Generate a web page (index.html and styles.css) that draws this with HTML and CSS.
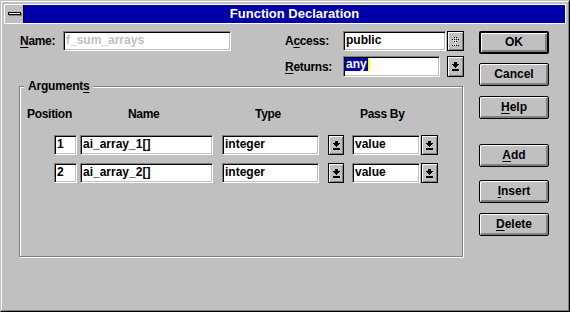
FILE: index.html
```html
<!DOCTYPE html>
<html>
<head>
<meta charset="utf-8">
<link rel="stylesheet" href="styles.css">
</head>
<body>
<div class="window">
  <div class="frame">
    <div class="titlebar">
      <div class="sysmenu"><span class="sysbar"></span></div>
      <div class="caption">Function Declaration</div>
    </div>
    <div class="client">
      <div class="form">
        <div class="row row-top">
          <span class="lbl lbl-name"><u>N</u>ame:</span>
          <div class="edit edit-name disabled">f_sum_arrays</div>
          <span class="lbl lbl-access">A<u>c</u>cess:</span>
          <div class="edit edit-access">public</div>
          <div class="dropbtn dropbtn-access">
            <svg width="7" height="9" viewBox="0 0 7 9" shape-rendering="crispEdges">
              <defs>
                <pattern id="dith" width="2" height="2" patternUnits="userSpaceOnUse">
                  <rect x="0" y="0" width="1" height="1" fill="#000"/>
                  <rect x="1" y="1" width="1" height="1" fill="#fff"/>
                </pattern>
              </defs>
              <path d="M2 0h3v2h-3z M0 2h7v1h-7z M1 3h5v1h-5z M2 4h3v1h-3z M3 5h1v1h-1z M0 7h7v2h-7z" fill="url(#dith)"/>
            </svg>
          </div>
        </div>
        <div class="row row-returns">
          <span class="lbl lbl-returns"><u>R</u>eturns:</span>
          <div class="edit edit-returns"><span class="sel">any</span><span class="caret"></span></div>
          <div class="dropbtn dropbtn-returns">
            <svg width="7" height="9" viewBox="0 0 7 9" shape-rendering="crispEdges"><path d="M2 0h3v2h-3z M0 2h7v1h-7z M1 3h5v1h-5z M2 4h3v1h-3z M3 5h1v1h-1z M0 7h7v2h-7z" fill="#000"/></svg>
          </div>
        </div>
        <div class="group">
          <span class="legend">Argument<u>s</u></span>
          <div class="headers">
            <span class="hdr hdr-pos">Position</span>
            <span class="hdr hdr-name">Name</span>
            <span class="hdr hdr-type">Type</span>
            <span class="hdr hdr-pass">Pass By</span>
          </div>
          <div class="argrow">
            <div class="edit f-pos">1</div>
            <div class="edit f-name">ai_array_1[]</div>
            <div class="edit f-type">integer</div>
            <div class="dropbtn d-type"><svg width="7" height="9" viewBox="0 0 7 9" shape-rendering="crispEdges"><path d="M2 0h3v2h-3z M0 2h7v1h-7z M1 3h5v1h-5z M2 4h3v1h-3z M3 5h1v1h-1z M0 7h7v2h-7z" fill="#000"/></svg></div>
            <div class="edit f-pass">value</div>
            <div class="dropbtn d-pass"><svg width="7" height="9" viewBox="0 0 7 9" shape-rendering="crispEdges"><path d="M2 0h3v2h-3z M0 2h7v1h-7z M1 3h5v1h-5z M2 4h3v1h-3z M3 5h1v1h-1z M0 7h7v2h-7z" fill="#000"/></svg></div>
          </div>
          <div class="argrow argrow-2">
            <div class="edit f-pos">2</div>
            <div class="edit f-name">ai_array_2[]</div>
            <div class="edit f-type">integer</div>
            <div class="dropbtn d-type"><svg width="7" height="9" viewBox="0 0 7 9" shape-rendering="crispEdges"><path d="M2 0h3v2h-3z M0 2h7v1h-7z M1 3h5v1h-5z M2 4h3v1h-3z M3 5h1v1h-1z M0 7h7v2h-7z" fill="#000"/></svg></div>
            <div class="edit f-pass">value</div>
            <div class="dropbtn d-pass"><svg width="7" height="9" viewBox="0 0 7 9" shape-rendering="crispEdges"><path d="M2 0h3v2h-3z M0 2h7v1h-7z M1 3h5v1h-5z M2 4h3v1h-3z M3 5h1v1h-1z M0 7h7v2h-7z" fill="#000"/></svg></div>
          </div>
        </div>
      </div>
      <div class="buttons">
        <div class="btn btn-default">OK</div>
        <div class="btn btn-cancel">Cancel</div>
        <div class="btn btn-help"><span><u>H</u>elp</span></div>
        <div class="btn btn-add"><span><u>A</u>dd</span></div>
        <div class="btn btn-insert"><span><u>I</u>nsert</span></div>
        <div class="btn btn-delete"><span><u>D</u>elete</span></div>
      </div>
    </div>
  </div>
</div>
</body>
</html>
```
FILE: styles.css
```css
* { box-sizing: border-box; }
html, body { margin: 0; padding: 0; }
body {
  background: #c0c0c0;
  font-family: "Liberation Sans", Arial, sans-serif;
  font-size: 12px;
  font-weight: bold;
  color: #000;
}
u { text-decoration: underline; text-underline-offset: 2px; }

.window {
  width: 570px;
  height: 312px;
  border: 1px solid;
  border-color: #c0c0c0 #000 #000 #c0c0c0;
  background: #c0c0c0;
}
.frame {
  height: 100%;
  border: 1px solid;
  border-color: #fff #808080 #808080 #fff;
  padding: 2px 2px 0;
}

/* title bar */
.titlebar {
  display: flex;
  height: 20px;
  border: 1px solid #fff;
}
.sysmenu {
  width: 19px;
  border-right: 1px solid #000;
  background: #c0c0c0;
  padding: 7px 0 0 3px;
}
.sysbar {
  display: block;
  width: 13px;
  height: 3px;
  background: #fff;
  border: 1px solid #000;
  box-shadow: 1px 1px 0 #808080;
}
.caption {
  flex: 1;
  background: #0000a8;
  color: #fff;
  font-size: 13px;
  line-height: 18px;
  text-align: center;
}

/* client area */
.client {
  display: flex;
  padding: 7px 0 0 16px;
}
.form { width: 445px; }

.row {
  display: flex;
  align-items: center;
  height: 20px;
}
.lbl { line-height: 14px; letter-spacing: -0.3px; }
.lbl-name { width: 43px; }
.lbl-access { width: 58px; margin-left: 54px; }
.lbl-returns { width: 58px; }
.row-returns { margin-top: 5px; height: 21px; padding-left: 265px; }

.edit {
  height: 20px;
  background: #fff;
  border: 1px solid;
  border-color: #808080 #fff #fff #808080;
  box-shadow: inset 1px 1px 0 #000, inset -1px -1px 0 #c0c0c0;
  padding: 1px 0 0 2px;
  line-height: 14px;
  white-space: nowrap;
  overflow: hidden;
}
.disabled { color: #c0c0c0; }
.edit-name { width: 168px; }
.edit-access { width: 103px; }
.edit-returns { width: 97px; height: 21px; display: flex; align-items: flex-start; padding: 1px 0 0 1px; }
.sel { background: #0000a8; color: #fff; line-height: 13px; padding: 0 1px; }
.caret { display: block; width: 2px; height: 13px; background: #ffff00; }

.dropbtn {
  width: 17px;
  height: 20px;
  background: #c0c0c0;
  border: 1px solid #000;
  box-shadow: inset 1px 1px 0 #fff, inset -1px -1px 0 #808080;
  display: flex;
  align-items: center;
  justify-content: center;
}
.dropbtn svg { display: block; }
.dropbtn-access { margin-left: 1px; }
.dropbtn-returns { margin-left: 7px; height: 21px; }

/* group box */
.group {
  position: relative;
  margin: 9px 0 0 -1px;
  width: 444px;
  height: 171px;
  border: 1px solid #808080;
  box-shadow: inset 1px 1px 0 #fff, 1px 1px 0 #fff;
  padding-top: 20px;
}
.legend {
  position: absolute;
  left: 4px;
  top: -8px;
  padding: 0 3px 0 4px;
  background: #c0c0c0;
  line-height: 14px;
  letter-spacing: -0.2px;
}
.headers {
  display: flex;
  padding-left: 7px;
  line-height: 14px;
  letter-spacing: -0.3px;
}
.hdr-pos { width: 101px; }
.hdr-name { width: 127px; }
.hdr-type { width: 105px; }

.argrow {
  display: flex;
  margin-top: 14px;
  padding-left: 34px;
}
.argrow-2 { margin-top: 8px; }
.f-pos { width: 23px; }
.f-name { width: 133px; margin-left: 3px; }
.f-type { width: 97px; margin-left: 9px; }
.d-type { width: 16px; margin-left: 9px; }
.f-pass { width: 68px; margin-left: 8px; }
.d-pass { margin-left: 1px; }

/* push buttons */
.buttons {
  display: flex;
  flex-direction: column;
  margin-left: 14px;
}
.btn {
  width: 70px;
  height: 23px;
  border: 1px solid #000;
  border-radius: 2px;
  background: #c0c0c0;
  box-shadow: inset 1px 1px 0 #fff, inset -1px -1px 0 #808080, inset -2px -2px 0 #808080;
  display: flex;
  align-items: center;
  justify-content: center;
  line-height: 14px;
  padding-bottom: 1px;
}
.btn-default { border-width: 2px; }
.btn-cancel { margin-top: 9px; }
.btn-help { margin-top: 10px; }
.btn-add { margin-top: 25px; }
.btn-insert { margin-top: 13px; }
.btn-delete { margin-top: 10px; }
```
